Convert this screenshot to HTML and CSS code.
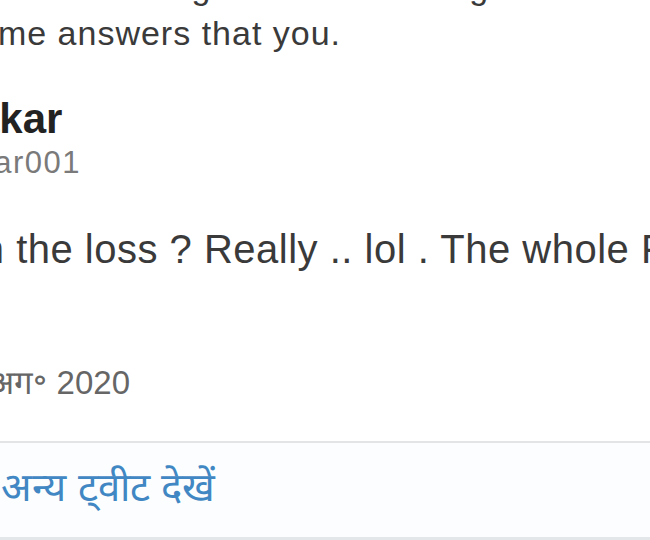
FILE: index.html
```
<!DOCTYPE html>
<html lang="hi">
  <head>
    <meta charset="UTF-8" />
    <meta name="viewport" content="width=device-width, initial-scale=1.0" />
    <title>Tweet</title>
    <link rel="stylesheet" href="styles.css">
  </head>
  <body>
    <div class="embed">
      <!-- parent tweet in the thread, only its last lines are in view -->
      <p class="parent-text">I was all the big talk around congress then got<br>some answers that you.</p>

      <div class="author">
        <span class="author-name">Sudhakar</span>
        <span class="author-handle">@sudakar001</span>
      </div>

      <p class="tweet-text">Focus on the loss ? Really .. lol . The whole Family</p>

      <div class="tweet-date">9:05 am · 26 अग॰ 2020</div>

      <div class="embed-footer">
        <a class="more-link" href="#">Sudhakar के अन्य ट्वीट देखें</a>
      </div>
    </div>
  </body>
</html>
```

FILE: styles.css
```
body {
  margin: 0;
  padding: 0;
  background-color: #fff;
  overflow: hidden;
  font-family: "Liberation Sans", Arial, sans-serif;
}

/* the embed is cropped: its left edge sits outside the window */
.embed {
  margin-top: -36px;
  white-space: nowrap;
}

.parent-text {
  margin: 0 0 0 -40px;
  font-size: 34px;
  line-height: 46px;
  letter-spacing: 1px;
  color: #3a3a3a;
}

.author {
  display: flex;
  flex-direction: column;
  margin: 39px 0 0 -129px;
}

.author-name {
  font-size: 42px;
  line-height: 48px;
  font-weight: bold;
  color: #222;
}

.author-handle {
  font-size: 31px;
  line-height: 40px;
  letter-spacing: 1.5px;
  color: #7a7a7a;
}

.tweet-text {
  margin: 40px 0 0 -164px;
  font-size: 40px;
  line-height: 52px;
  letter-spacing: 0.5px;
  color: #3a3a3a;
}

.tweet-date {
  margin: 86px 0 0 -205px;
  font-size: 33px;
  line-height: 44px;
  color: #666;
}

.embed-footer {
  margin-top: 36px;
  height: 94px;
  display: flex;
  align-items: center;
  background-color: #fcfdfe;
  border-top: 2px solid #e2e4e6;
  border-bottom: 3px solid #e4e7ea;
}

.more-link {
  margin: -10px 0 0 -223px;
  font-size: 40px;
  color: #4087c3;
  text-decoration: none;
}
```
